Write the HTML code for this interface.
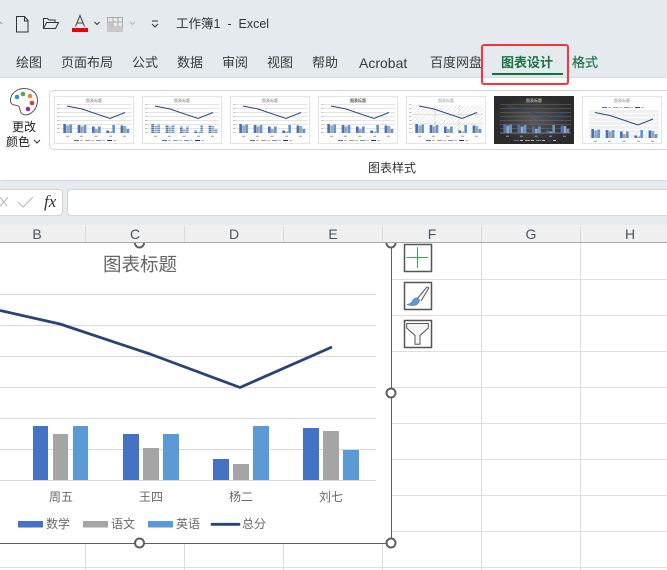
<!DOCTYPE html>
<html lang="zh-CN"><head><meta charset="utf-8"><title>工作簿1 - Excel</title>
<style>
*{box-sizing:border-box}
html,body{margin:0;padding:0;width:667px;height:570px;overflow:hidden;background:#fff}
body{position:relative;font-family:"Liberation Sans","Noto Sans CJK SC",sans-serif;color:#2b2b2b}
.a{position:absolute}
.t{position:absolute;white-space:nowrap;line-height:16px;font-size:13px;color:#3a3a3a}
.g{color:#686868;font-size:12px}
.col{position:absolute;top:226px;height:17px;line-height:17px;font-size:14px;color:#4a5560;width:20px;text-align:center}
svg{position:absolute;display:block;overflow:hidden}
svg.th{filter:blur(.35px)}
svg.th text{font-family:"Liberation Sans","Noto Sans CJK SC",sans-serif}
</style></head><body>
<div class="a" style="left:0;top:0;width:667px;height:78px;background:#e4eaee"></div>
<div class="a" style="left:0;top:78px;width:667px;height:102px;background:#fff;box-shadow:0 1px 3px rgba(90,100,110,.45)"></div>
<div class="a" style="left:0;top:181px;width:667px;height:44px;background:#e6ebef"></div>

<!-- quick access icons -->
<svg style="left:0;top:10px" width="170" height="26" viewBox="0 0 170 26" fill="none">
<path d="M0 12l2 2" stroke="#999"/>
<path d="M16.500 6.500h8l3.500 4v11.500h-11.500zM24.500 6.500v4.500h3.500" stroke="#333" stroke-width="1"/>
<path d="M43.500 18.500v-10h4l1.500 1.500h6v2.500M43.500 18.500l3-6h12l-3 6z" stroke="#333" stroke-width="1"/>
<path d="M75.500 16.500l4.500-11 4.500 11M77 13h6" stroke="#444" stroke-width="1"/>
<rect x="72" y="18" width="16" height="4" fill="#f00000"/>
<path d="M94.500 12l2.500 2.500 2.500-2.500" stroke="#333" stroke-width="1"/>
<path d="M107.500 7.500h15v14h-15zM107.500 12h15M107.500 17h15M113 7.500v14M118 7.500v14" stroke="#aaa" stroke-width="1"/>
<rect x="107" y="12" width="6" height="10" fill="#c4c4c4"/><rect x="107" y="17" width="16" height="5" fill="#c9c9c9"/>
<path d="M130 12l2.500 2.500 2.500-2.500" stroke="#b5b5b5" stroke-width="1"/>
<path d="M152 11h6M152 14l3 3 3-3" stroke="#333" stroke-width="1"/>
</svg>
<div class="t" style="left:176px;top:16px;font-size:12.500px;color:#333">工作簿1&nbsp; - &nbsp;Excel</div>

<!-- tabs -->
<div class="t" style="left:16px;top:55px">绘图</div>
<div class="t" style="left:61px;top:55px">页面布局</div>
<div class="t" style="left:132px;top:55px">公式</div>
<div class="t" style="left:177px;top:55px">数据</div>
<div class="t" style="left:222px;top:55px">审阅</div>
<div class="t" style="left:267px;top:55px">视图</div>
<div class="t" style="left:312px;top:55px">帮助</div>
<div class="t" style="left:359px;top:55px;font-size:14px">Acrobat</div>
<div class="t" style="left:430px;top:55px">百度网盘</div>
<div class="t" style="left:501px;top:55px;color:#1c7345;font-weight:bold">图表设计</div>
<div class="t" style="left:572px;top:55px;color:#1c7345;-webkit-text-stroke:.2px #1c7345">格式</div>
<div class="a" style="left:492px;top:73px;width:71px;height:2px;background:#107040"></div>
<div class="a" style="left:481px;top:44px;width:88px;height:41px;border:2px solid #f4353d;border-radius:3px"></div>

<!-- palette -->
<svg style="left:8px;top:86px" width="32" height="34" viewBox="0 0 32 34" fill="none">
<path d="M16 2.500C8 2.500 2 8.500 2.500 15c.3 4 4 4 6.500 4.500 3 .6 2.500 3.500 3.500 6 1 3 5 4.500 9 2.500 5-2.500 8-8 8-13.500C29.500 7 24 2.500 16 2.500z" stroke="#555" stroke-width="1" fill="#fff"/>
<circle cx="9" cy="11" r="2.300" fill="#2f8fd8"/><circle cx="15" cy="8" r="2.300" fill="#4cae4f"/><circle cx="22" cy="10" r="2.300" fill="#f08a1d"/><circle cx="24" cy="17" r="2.300" fill="#e8372c"/><circle cx="20" cy="23" r="2.300" fill="#8e2fa8"/>
</svg>
<div class="t" style="left:12px;top:119px;font-size:12px;color:#222">更改</div>
<div class="t" style="left:6px;top:134px;font-size:12px;color:#222">颜色</div>
<svg style="left:33px;top:139px" width="8" height="6" fill="none"><path d="M1 1l3 3 3-3" stroke="#333"/></svg>

<!-- gallery -->
<div class="a" style="left:49px;top:90px;width:640px;height:60px;border:1px solid #d6d6d6;border-radius:5px;background:#fff"></div>

<svg width="0" height="0" style="left:0;top:0">
<defs>
<pattern id="h" width="3" height="3" patternUnits="userSpaceOnUse" patternTransform="rotate(45)"><path d="M0 0v3" stroke="#bbb" stroke-width=".6"/></pattern>
<g id="bars">
<path d="M9.300 28H12v9H9.300zM23.700 29h2.700v8h-2.700zM38 30.500h2.700V37H38zM52.300 34.500H55V37h-2.700zM66.600 29.500h2.700V37h-2.700z" fill="#4472c4"/>
<path d="M12.300 29.500H15V37h-2.700zM26.700 30.500h2.700V37h-2.700zM41 33h2.700v4H41zM55.300 35.500H58V37h-2.700zM69.600 30h2.700v7h-2.700z" fill="#a5a5a5"/>
<path d="M15.300 28.500H18V37h-2.700zM29.700 29h2.700v8h-2.700zM44 30.500h2.700V37H44zM58.300 29H61v8h-2.700zM72.600 33h2.700v4h-2.700z" fill="#5b9bd5"/>
</g>
<path id="grid" d="M6 8.500h71M6 12.500h71M6 16.500h71M6 20.500h71M6 24.500h71M6 28.500h71M6 32.500h71M6 36.800h71" stroke="#dcdcdc" stroke-width=".7" fill="none"/>
<path id="ticks" d="M3 8.500h2.500M3 12.500h2.500M3 16.500h2.500M3 20.500h2.500M3 24.500h2.500M3 28.500h2.500M3 32.500h2.500M3 36.500h2.500" stroke="#aaa" stroke-width=".7" fill="none"/>
<path id="cats" d="M12 40.300h3M26 40.300h3M40.500 40.300h3M55 40.300h3M69 40.300h3" stroke="#999" stroke-width="1" fill="none"/>
<path id="ln" d="M13 10L28 13 56 22.500 71 16.500" stroke="#2a4a7f" stroke-width="1" fill="none"/>
<g id="leg"><path d="M20 44.500h5" stroke="#4472c4" stroke-width="1"/><path d="M26 44.500h3" stroke="#bbb" stroke-width="1"/><path d="M31 44.500h5" stroke="#a5a5a5" stroke-width="1"/><path d="M37 44.500h3" stroke="#bbb" stroke-width="1"/><path d="M42 44.500h5" stroke="#5b9bd5" stroke-width="1"/><path d="M48 44.500h3" stroke="#bbb" stroke-width="1"/><path d="M53 44.500h5" stroke="#264478" stroke-width="1"/><path d="M59 44.500h3" stroke="#bbb" stroke-width="1"/></g>
</defs></svg>

<svg class="th" style="left:54px;top:96px" width="80" height="48" viewBox="0 0 80 48"><rect x=".5" y=".5" width="79" height="47" fill="#fff" stroke="#e4e4e4"/><use href="#grid"/><use href="#ticks"/><use href="#bars"/><use href="#ln"/><use href="#cats"/><use href="#leg"/><text x="40" y="6" font-size="4" fill="#777" text-anchor="middle">图表标题</text></svg>
<svg class="th" style="left:142px;top:96px" width="80" height="48" viewBox="0 0 80 48"><rect x=".5" y=".5" width="79" height="47" fill="#fff" stroke="#e4e4e4"/><use href="#grid"/><use href="#ticks"/><use href="#bars"/><path d="M8 29.500h68M8 31.500h68M8 33.500h68M8 35.500h68" stroke="#fff" stroke-width=".6"/><use href="#ln"/><use href="#cats"/><use href="#leg"/><text x="40" y="6" font-size="4" fill="#777" text-anchor="middle">图表标题</text></svg>
<svg class="th" style="left:230px;top:96px" width="80" height="48" viewBox="0 0 80 48"><rect x=".5" y=".5" width="79" height="47" fill="#fff" stroke="#e4e4e4"/><use href="#grid"/><use href="#ticks"/><use href="#bars"/><use href="#ln"/><use href="#cats"/><use href="#leg"/><text x="40" y="6" font-size="4" fill="#777" text-anchor="middle">图表标题</text></svg>
<svg class="th" style="left:318px;top:96px" width="80" height="48" viewBox="0 0 80 48"><rect x=".5" y=".5" width="79" height="47" fill="#fff" stroke="#e4e4e4"/><use href="#grid"/><use href="#ticks"/><use href="#bars"/><use href="#ln"/><use href="#cats"/><use href="#leg"/><text x="40" y="6" font-size="4" fill="#555" text-anchor="middle" font-weight="bold">图表标题</text></svg>
<svg class="th" style="left:406px;top:96px" width="80" height="48" viewBox="0 0 80 48"><rect x=".5" y=".5" width="79" height="47" fill="#fff" stroke="#e4e4e4"/><rect x="6" y="9" width="71" height="28" fill="url(#h)"/><path d="M6 18.500h71M6 28h71M29 9v28M53 9v28" stroke="#ccc" stroke-width=".6"/><use href="#ticks"/><use href="#bars"/><use href="#ln"/><use href="#cats"/><use href="#leg"/><text x="40" y="6" font-size="4" fill="#999" text-anchor="middle">图表标题</text></svg>
<svg class="th" style="left:494px;top:96px" width="80" height="48" viewBox="0 0 80 48"><defs><radialGradient id="dk"><stop offset="0" stop-color="#5a5a5a"/><stop offset="1" stop-color="#2b2b2b"/></radialGradient></defs><rect width="80" height="48" fill="url(#dk)"/><path d="M6 8.500h71M6 12.500h71M6 16.500h71M6 20.500h71M6 24.500h71M6 28.500h71M6 32.500h71" stroke="#6e6e6e" stroke-width=".5"/><path d="M6 37h71" stroke="#bbb" stroke-width=".6"/><use href="#bars"/><use href="#ln"/><use href="#cats"/><use href="#leg"/><text x="40" y="6" font-size="4" fill="#ddd" text-anchor="middle">图表标题</text></svg>
<svg class="th" style="left:582px;top:96px" width="80" height="48" viewBox="0 0 80 48"><rect x=".5" y=".5" width="79" height="47" fill="#fff" stroke="#e4e4e4"/><rect x="7" y="14" width="70" height="28" fill="#f0f0f0"/><path d="M7 17.500h70M7 21.500h70M7 25.500h70M7 29.500h70M7 33.500h70M7 37.500h70" stroke="#fff" stroke-width=".9"/><g transform="translate(0,5)"><use href="#bars"/></g><g transform="translate(0,6.500)"><use href="#ln"/></g><g transform="translate(0,-33)"><use href="#leg"/></g><g transform="translate(0,5)"><use href="#cats"/></g><text x="40" y="6" font-size="4" fill="#888" text-anchor="middle">图表标题</text></svg>

<div class="t" style="left:368px;top:160px;font-size:12px;color:#333">图表样式</div>

<!-- formula bar -->
<div class="a" style="left:-6px;top:189px;width:69px;height:27px;background:#fff;border:1px solid #d4d4d4;border-radius:4px"></div>
<div class="a" style="left:67px;top:189px;width:620px;height:27px;background:#fff;border:1px solid #d4d4d4;border-radius:4px"></div>
<svg style="left:0;top:192px" width="38" height="20" fill="none"><path d="M0 5l7 9M8 5l-8 9" stroke="#b5b5b5" stroke-width="1"/><path d="M18 10l5 5 10-10" stroke="#b5b5b5" stroke-width="1"/></svg>
<div class="t" style="left:44px;top:194px;font:italic 17px 'Liberation Serif',serif;line-height:16px;color:#333">fx</div>

<!-- sheet grid -->
<svg style="left:0;top:243px" width="667" height="327" fill="none">
<path d="M0 36.500h667M0 72.500h667M0 108.500h667M0 144.500h667M0 180.500h667M0 216.500h667M0 252.500h667M0 288.500h667M0 324.500h667" stroke="#dedede"/>
<path d="M85.500 0v327M184.500 0v327M283.500 0v327M382.500 0v327M481.500 0v327M580.500 0v327" stroke="#dedede"/>
</svg>

<!-- chart -->
<div class="a" style="left:-4px;top:243px;width:396px;height:301px;background:#fff;border:1.500px solid #5f5f5f;border-top:0"></div>
<svg style="left:0;top:243px" width="390" height="300" viewBox="0 243 390 300" fill="none">
<path d="M0 294.500h376M0 325.500h376M0 356.500h376M0 387.500h376M0 418.500h376M0 449.500h376M0 480.500h376" stroke="#d9d9d9"/>
<g fill="#4472c4"><rect x="33" y="426" width="15" height="54"/><rect x="123" y="434" width="16" height="46"/><rect x="213" y="459" width="16" height="21"/><rect x="303" y="428" width="16" height="52"/></g>
<g fill="#a5a5a5"><rect x="53" y="434" width="15" height="46"/><rect x="143" y="448" width="16" height="32"/><rect x="233" y="464" width="16" height="16"/><rect x="323" y="431" width="16" height="49"/></g>
<g fill="#5b9bd5"><rect x="73" y="426" width="15" height="54"/><rect x="163" y="434" width="16" height="46"/><rect x="253" y="426" width="16" height="54"/><rect x="343" y="450" width="16" height="30"/></g>
<path d="M0 310.500L60 324 150 354 240 387.500 332 347" stroke="#264478" stroke-width="2.800" stroke-linejoin="round"/>
<rect x="18" y="521" width="25" height="6.500" fill="#4472c4"/><rect x="83" y="521" width="25" height="6.500" fill="#a5a5a5"/><rect x="148" y="521" width="25" height="6.500" fill="#5b9bd5"/>
<path d="M212 524.300h27" stroke="#264478" stroke-width="2.800" stroke-linecap="round"/>
</svg>
<div class="t" style="left:103px;top:255px;font-size:18.500px;line-height:20px;color:#666">图表标题</div>
<div class="t g" style="left:49px;top:489px">周五</div>
<div class="t g" style="left:139px;top:489px">王四</div>
<div class="t g" style="left:229px;top:489px">杨二</div>
<div class="t g" style="left:319px;top:489px">刘七</div>
<div class="t g" style="left:46px;top:516px">数学</div>
<div class="t g" style="left:111px;top:516px">语文</div>
<div class="t g" style="left:176px;top:516px">英语</div>
<div class="t g" style="left:242px;top:516px">总分</div>

<!-- column header -->
<div class="a" style="left:0;top:225px;width:667px;height:18px;background:#f0f0f0;border-bottom:1px solid #a8a8a8"></div>
<svg style="left:0;top:225px" width="667" height="18" fill="none"><path d="M85.500 1v16M184.500 1v16M283.500 1v16M382.500 1v16M481.500 1v16M580.500 1v16" stroke="#d8d8d8"/></svg>
<div class="col" style="left:27px">B</div><div class="col" style="left:125px">C</div><div class="col" style="left:224px">D</div><div class="col" style="left:323px">E</div><div class="col" style="left:422px">F</div><div class="col" style="left:521px">G</div><div class="col" style="left:620px">H</div>

<!-- handles -->
<svg style="left:130px;top:243px" width="270" height="310" viewBox="130 243 270 310" fill="#fff" stroke="#5f5f5f" stroke-width="2">
<circle cx="139.500" cy="243" r="4.500"/><circle cx="391" cy="243" r="4.500"/><circle cx="391" cy="393" r="4.500"/><circle cx="139.500" cy="543" r="4.500"/><circle cx="391" cy="543" r="4.500"/>
</svg>

<!-- chart side buttons -->
<svg style="left:403px;top:243px" width="31" height="106" fill="none">
<rect x="1.500" y="1.500" width="27" height="27" fill="#fff" stroke="#555" stroke-width="1.500"/>
<path d="M3.500 14.500h21.500M14.500 4v21" stroke="#3ea55a" stroke-width="1"/>
<rect x="1.500" y="39.500" width="27" height="27" fill="#fff" stroke="#555" stroke-width="1.500"/>
<path d="M14 56L23.500 44.500c1-1 2.500 0 2 1L18 58" fill="#fff" stroke="#666" stroke-width="1.200"/>
<path d="M14.500 55c-3-.5-4.500 1.500-5.500 3.500-.8 1.500-2.500 2.500-5 3 4 1.800 9.500 1.500 11.500-1.500 1.500-2 1.500-4-1-5z" fill="#5a9ad8" stroke="#4a8ac8" stroke-width=".6"/>
<rect x="1.500" y="77.500" width="27" height="27" fill="#fff" stroke="#555" stroke-width="1.500"/>
<path d="M3.700 80.500h21.600V85L17 92.500v8.800h-5v-8.800L3.700 85z" fill="#f5f5f5" stroke="#555" stroke-width="1"/>
</svg>
</body></html>
